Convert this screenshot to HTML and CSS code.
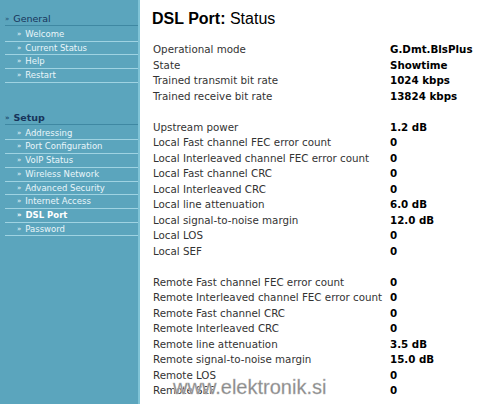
FILE: index.html
```html
<!DOCTYPE html>
<html>
<head>
<meta charset="utf-8">
<link rel="stylesheet" href="styles.css">
</head>
<body>
<div class="page">
  <nav class="sidebar">
    <div class="group">
      <div class="group-title"><span class="arrow">»</span>General</div>
      <ul class="menu">
        <li><span class="arrow">»</span>Welcome</li>
        <li><span class="arrow">»</span>Current Status</li>
        <li><span class="arrow">»</span>Help</li>
        <li><span class="arrow">»</span>Restart</li>
      </ul>
    </div>
    <div class="group group-setup">
      <div class="group-title"><span class="arrow">»</span>Setup</div>
      <ul class="menu">
        <li><span class="arrow">»</span>Addressing</li>
        <li><span class="arrow">»</span>Port Configuration</li>
        <li><span class="arrow">»</span>VoIP Status</li>
        <li><span class="arrow">»</span>Wireless Network</li>
        <li><span class="arrow">»</span>Advanced Security</li>
        <li><span class="arrow">»</span>Internet Access</li>
        <li class="active"><span class="arrow">»</span>DSL Port</li>
        <li><span class="arrow">»</span>Password</li>
      </ul>
    </div>
  </nav>
  <main class="content">
    <h1 class="title"><b>DSL Port:</b> Status</h1>
    <div class="stats">
      <div class="row"><span class="label">Operational mode</span><span class="value">G.Dmt.BlsPlus</span></div>
      <div class="row"><span class="label">State</span><span class="value">Showtime</span></div>
      <div class="row"><span class="label">Trained transmit bit rate</span><span class="value">1024 kbps</span></div>
      <div class="row"><span class="label">Trained receive bit rate</span><span class="value">13824 kbps</span></div>
      <div class="row blank"></div>
      <div class="row"><span class="label">Upstream power</span><span class="value">1.2 dB</span></div>
      <div class="row"><span class="label">Local Fast channel FEC error count</span><span class="value">0</span></div>
      <div class="row"><span class="label">Local Interleaved channel FEC error count</span><span class="value">0</span></div>
      <div class="row"><span class="label">Local Fast channel CRC</span><span class="value">0</span></div>
      <div class="row"><span class="label">Local Interleaved CRC</span><span class="value">0</span></div>
      <div class="row"><span class="label">Local line attenuation</span><span class="value">6.0 dB</span></div>
      <div class="row"><span class="label">Local signal-to-noise margin</span><span class="value">12.0 dB</span></div>
      <div class="row"><span class="label">Local LOS</span><span class="value">0</span></div>
      <div class="row"><span class="label">Local SEF</span><span class="value">0</span></div>
      <div class="row blank"></div>
      <div class="row"><span class="label">Remote Fast channel FEC error count</span><span class="value">0</span></div>
      <div class="row"><span class="label">Remote Interleaved channel FEC error count</span><span class="value">0</span></div>
      <div class="row"><span class="label">Remote Fast channel CRC</span><span class="value">0</span></div>
      <div class="row"><span class="label">Remote Interleaved CRC</span><span class="value">0</span></div>
      <div class="row"><span class="label">Remote line attenuation</span><span class="value">3.5 dB</span></div>
      <div class="row"><span class="label">Remote signal-to-noise margin</span><span class="value">15.0 dB</span></div>
      <div class="row"><span class="label">Remote LOS</span><span class="value">0</span></div>
      <div class="row"><span class="label">Remote SEF</span><span class="value">0</span></div>
    </div>
    <div class="watermark">www.elektronik.si</div>
  </main>
</div>
</body>
</html>
```
FILE: styles.css
```css
html, body {
  margin: 0;
  padding: 0;
  height: 100%;
  background: #ffffff;
}
.page {
  display: flex;
  height: 404px;
  overflow: hidden;
}
.sidebar {
  width: 138px;
  flex: none;
  background: #5ba5bd;
  border-right: 2px solid #7fc3d6;
  font-family: "DejaVu Sans", Verdana, sans-serif;
  font-size: 8.5px;
  padding-top: 12px;
  box-sizing: content-box;
}
.group-setup {
  margin-top: 28px;
}
.group-title {
  color: #17345a;
  font-size: 9.5px;
  height: 13px;
  line-height: 13px;
  margin-left: 5px;
  border-bottom: 1px solid #3f88a2;
}
.arrow {
  font-size: 7px;
  margin-right: 4px;
  vertical-align: 1px;
}
.group-title .arrow {
  color: #1f4d70;
  margin-right: 4px;
}
.group-setup .group-title {
  font-weight: bold;
}
.menu {
  list-style: none;
  margin: 2px 0 0 0;
  padding: 0;
}
.menu li {
  color: #eaf6fa;
  height: 12.7px;
  line-height: 13px;
  padding-left: 12px;
  margin-left: 5px;
  border-bottom: 1px solid #9fd3e2;
  white-space: nowrap;
}
.menu li.active {
  font-weight: bold;
  color: #ffffff;
}
.content {
  flex: 1;
  position: relative;
  padding-left: 12px;
}
.title {
  font-family: "Liberation Sans", Arial, sans-serif;
  font-size: 16px;
  font-weight: normal;
  color: #000;
  margin: 10px 0 0 0;
  line-height: 18px;
}
.title b {
  font-weight: bold;
}
.stats {
  margin-top: 14px;
  font-family: "DejaVu Sans", Verdana, sans-serif;
  font-size: 10.3px;
  color: #111;
}
.row {
  display: flex;
  height: 15.5px;
  line-height: 15.5px;
}
.label {
  width: 237px;
  flex: none;
  padding-left: 1px;
  color: #333333;
}
.value {
  font-weight: bold;
  color: #000;
}
.watermark {
  position: absolute;
  left: 33px;
  top: 375px;
  font-family: "Liberation Sans", Arial, sans-serif;
  font-size: 20px;
  color: #8a8a8a;
  -webkit-text-stroke: 0.3px #bbbbbb;
  line-height: 24px;
  text-shadow: 0 0 1px #fff;
}
```
